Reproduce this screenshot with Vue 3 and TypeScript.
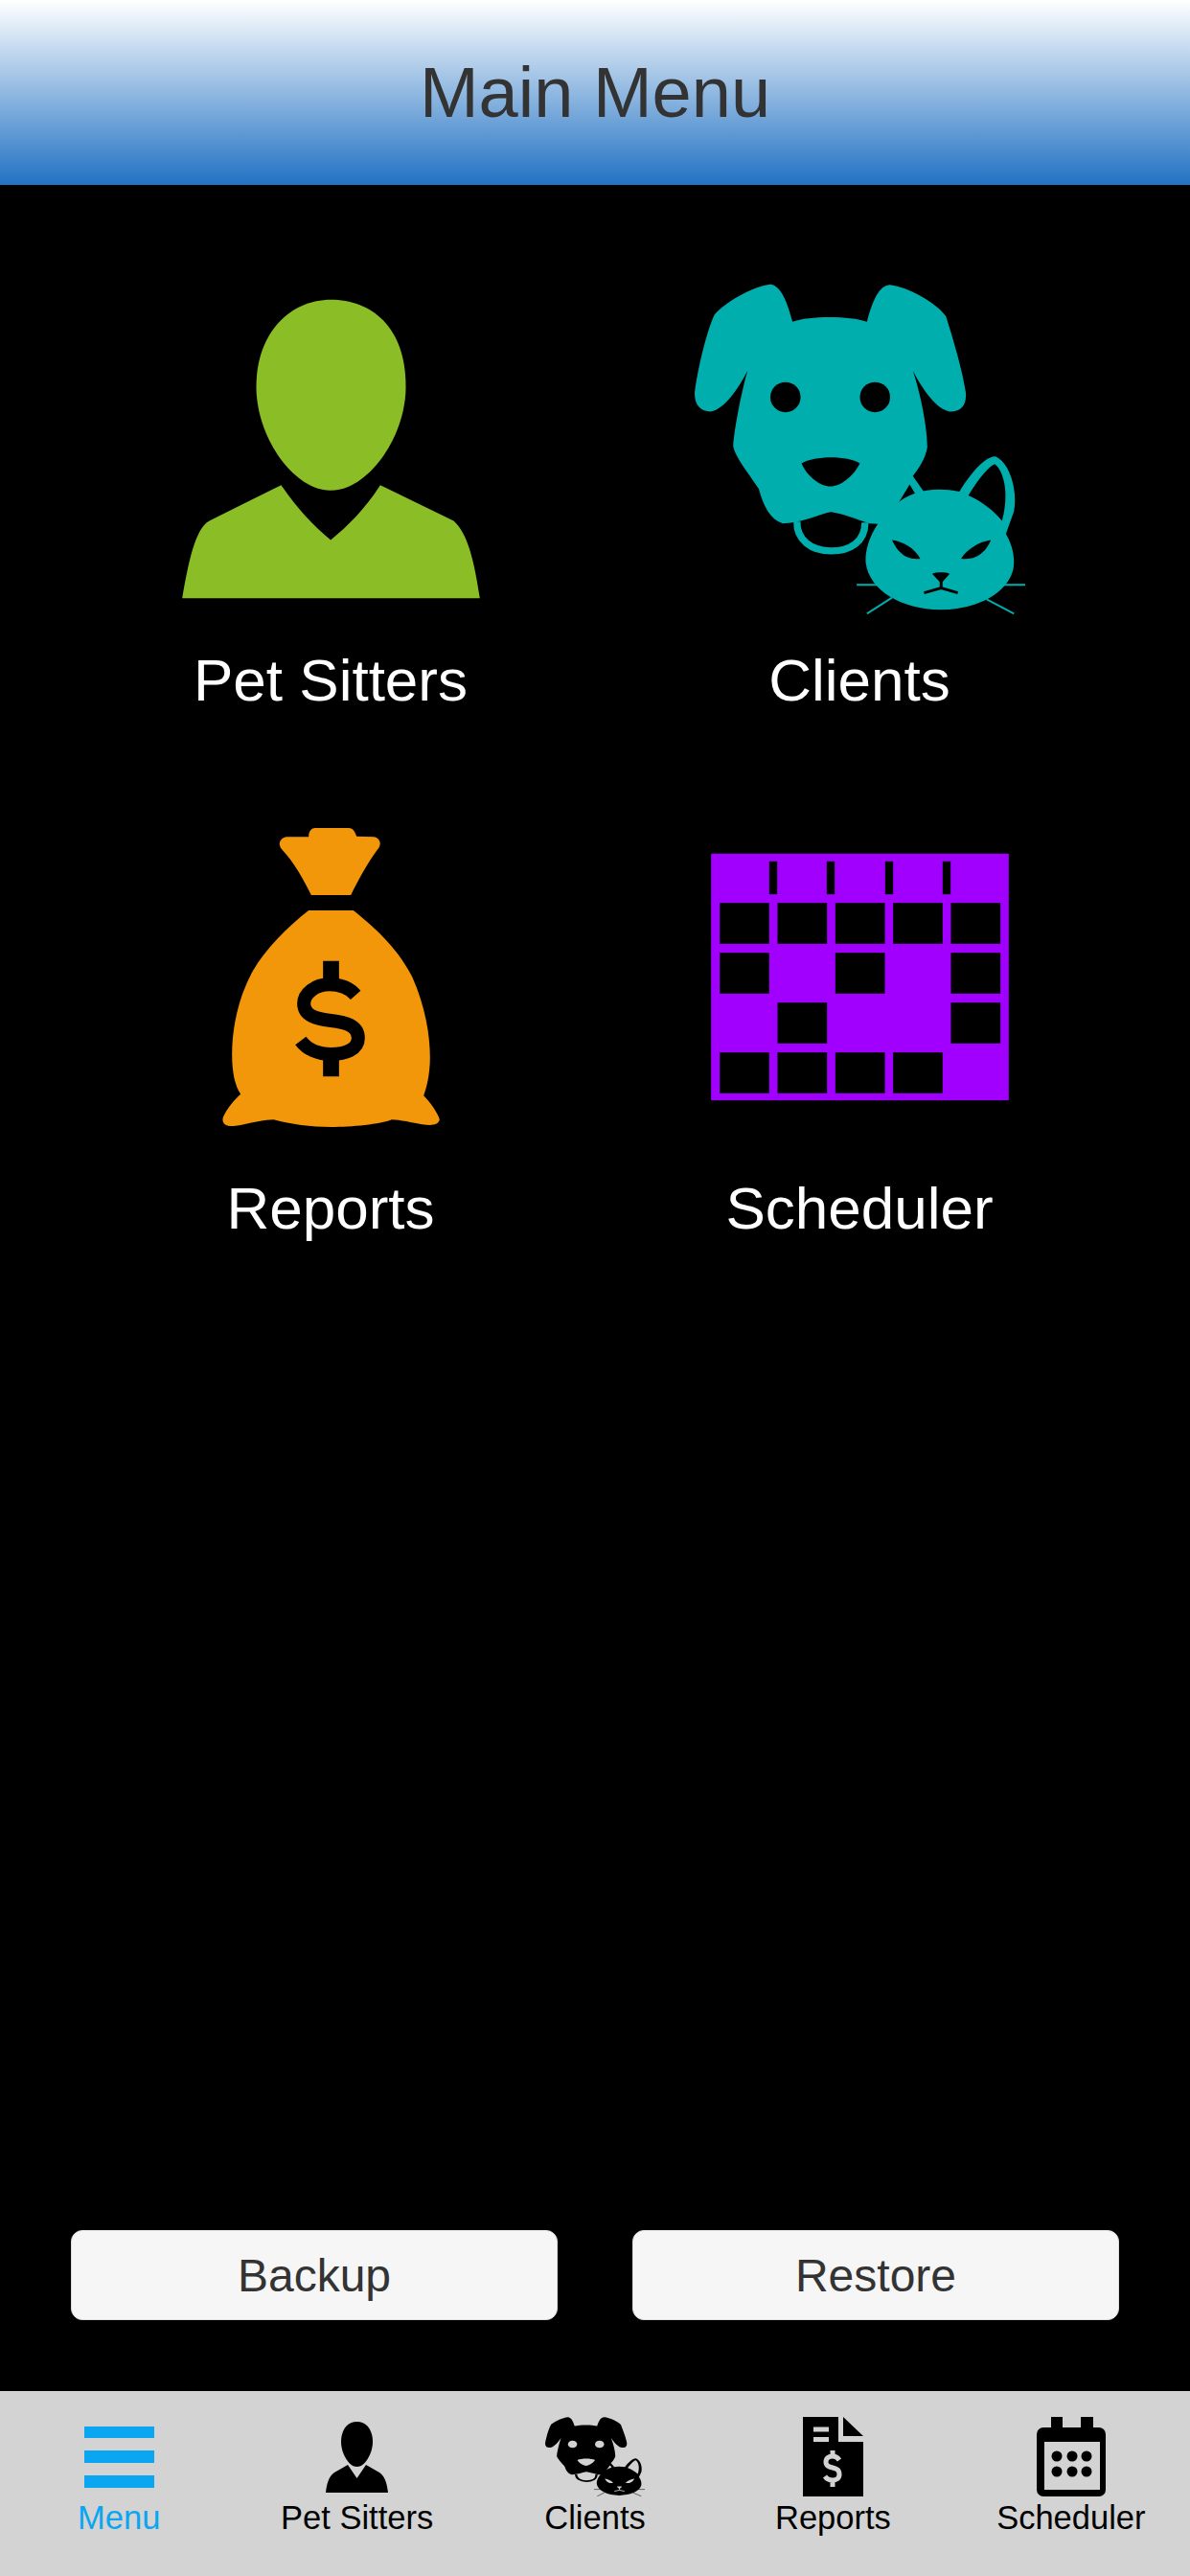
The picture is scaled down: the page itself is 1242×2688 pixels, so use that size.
<script setup lang="ts">
const menuItems = [
  { key: 'sitters', label: 'Pet Sitters' },
  { key: 'clients', label: 'Clients' },
  { key: 'reports', label: 'Reports' },
  { key: 'scheduler', label: 'Scheduler' }
]

const tabs = [
  { key: 'menu', label: 'Menu' },
  { key: 'sitters', label: 'Pet Sitters' },
  { key: 'clients', label: 'Clients' },
  { key: 'reports', label: 'Reports' },
  { key: 'scheduler', label: 'Scheduler' }
]

// cells of the month grid that are cut out of the purple block
const schedulerCells = [
  [0, 1, 2, 3, 4],
  [0, 2, 4],
  [1, 4],
  [0, 1, 2, 3]
].flatMap((cols, row) => cols.map((col) => ({ x: 92 + col * 181, y: 217 + row * 156 })))

const schedulerTicks = [247, 427, 610, 790]
const calendarDots = [21, 37, 52].flatMap((x) => [41, 57].map((y) => ({ x, y })))
</script>

<template>
  <div class="app">
    <svg class="defs" aria-hidden="true">
      <symbol id="pets" viewBox="75 78 1030 1034" preserveAspectRatio="none">
        <!-- dog -->
        <path d="M380 197C430 178 560 178 612 197C630 130 650 82 685 82C740 90 825 135 858 180C880 250 910 350 920 420C922 460 905 478 870 478C830 472 785 410 755 350C775 410 800 520 800 590C795 625 770 660 755 680L790 730L660 830L620 828C580 815 530 795 500 792C470 795 420 825 350 828C310 815 290 775 275 720C250 680 200 620 195 585C200 520 225 400 240 350C210 410 165 472 125 478C90 478 75 455 75 420C85 340 115 220 137 175C170 135 260 85 310 80C345 82 365 140 380 197Z" />
        <path class="hole" d="M705 772L745 706L764 738Z" />
        <circle class="hole" cx="358" cy="433" r="47" />
        <circle class="hole" cx="637" cy="433" r="47" />
        <path class="hole" d="M408 640C450 615 550 615 590 640C570 680 530 712 498 712C465 712 425 680 408 640Z" />
        <path class="line" d="M394 822C392 880 440 914 500 914C560 914 606 885 606 825" stroke-width="22" />
        <!-- cat -->
        <path d="M700 770C750 725 820 712 900 728C935 670 980 618 1012 618C1055 635 1082 720 1070 790L1045 860C1062 890 1075 930 1068 970C1050 1050 950 1098 840 1098C720 1095 620 1040 608 950C605 880 650 810 700 770Z" />
        <path class="hole" d="M928 740C955 695 990 650 1010 642C1040 665 1055 735 1033 820C1000 780 960 755 928 740Z" />
        <path class="hole" d="M690 880C725 885 760 905 778 938C750 942 715 935 690 880Z" />
        <path class="hole" d="M998 880C965 885 925 905 905 938C935 942 975 935 998 880Z" />
        <path class="hole" d="M815 985C830 980 855 980 870 985L843 1015Z" />
        <path class="mouth" d="M843 1010V1030M790 1045L843 1030L895 1045" />
        <path class="line" d="M580 1020H650M612 1110L690 1060M1035 1020H1105M985 1065L1070 1110" stroke-width="6" />
      </symbol>
    </svg>

    <header class="app__header">Main Menu</header>

    <main class="app__main">
      <section class="menu-grid">
        <div v-for="item in menuItems" :key="item.key" class="menu-item" :class="`menu-item--${item.key}`">
          <svg v-if="item.key === 'sitters'" class="menu-item__icon" viewBox="38.5 77.5 1035 1035">
            <path d="M555 128C680 128 790 210 790 400C790 560 670 725 555 725C440 725 322 560 322 400C322 230 430 128 555 128Z" />
            <path d="M400 708L175 820C130 845 110 950 90 1062H1022C1005 950 985 860 940 820L710 708C665 780 610 835 555 880C500 835 445 775 400 708Z" />
          </svg>
          <svg v-else-if="item.key === 'clients'" class="menu-item__icon" viewBox="0 0 345 345">
            <use href="#pets" width="345" height="345" />
          </svg>
          <svg v-else-if="item.key === 'reports'" class="menu-item__icon" viewBox="-82.5 21 1035 1035">
            <path d="M365 100C365 80 375 72 385 72H490C505 72 510 85 515 98L570 100C590 105 595 125 580 140C550 180 520 235 497 282H373C350 235 320 180 282 140C268 125 272 105 295 100Z" />
            <path d="M365 330H505C560 375 640 440 690 540C730 630 745 720 745 790C745 840 735 885 725 910C745 930 770 965 775 985C770 1005 745 1003 720 1000C690 995 650 985 625 985C590 1000 500 1008 435 1008C370 1008 310 1000 255 985C220 985 170 1000 130 1005C105 1007 90 995 98 975C110 950 130 925 152 905C135 880 125 840 125 780C125 700 145 600 190 520C230 450 300 380 365 330Z" />
            <path class="dollar" d="M512 595C490 570 460 562 430 562C385 562 350 590 350 622C350 660 390 670 435 675C480 680 520 690 520 730C520 765 480 780 435 780C395 780 360 765 340 738" />
            <path class="dollar dollar--bar" d="M435 488V550M435 790V850" />
          </svg>
          <svg v-else class="menu-item__icon" viewBox="13.5 -68.5 1035 1035">
            <rect x="65" y="63" width="932" height="772" />
            <rect v-for="x in schedulerTicks" :key="x" class="cut" :x="x" y="87" width="25" height="103" />
            <rect v-for="c in schedulerCells" :key="`${c.x}-${c.y}`" class="cut" :x="c.x" :y="c.y" width="155" height="128" />
          </svg>
          <span class="menu-item__label">{{ item.label }}</span>
        </div>
      </section>

      <div class="actions">
        <button class="actions__btn">Backup</button>
        <button class="actions__btn">Restore</button>
      </div>
    </main>

    <nav class="tabbar">
      <div v-for="tab in tabs" :key="tab.key" class="tab" :class="{ 'tab--active': tab.key === 'menu' }">
        <div class="tab__icon">
          <svg v-if="tab.key === 'menu'" width="73" height="64" viewBox="0 0 73 64">
            <rect width="73" height="12" />
            <rect y="25" width="73" height="13" />
            <rect y="51" width="73" height="13" />
          </svg>
          <svg v-else-if="tab.key === 'sitters'" width="65" height="74" viewBox="0 0 65 74">
            <path d="M32.5 0C43 0 49 9 49 21C49 33 41 47 32.5 47C24 47 16 33 16 21C16 9 22 0 32.5 0Z" />
            <path d="M23 45L9 53C3 57 1 65 0 74H65C64 65 62 57 56 53L42 45L32.5 59Z" />
          </svg>
          <svg v-else-if="tab.key === 'clients'" width="104" height="83" viewBox="0 0 104 83">
            <use href="#pets" width="104" height="83" />
          </svg>
          <svg v-else-if="tab.key === 'reports'" width="63" height="83" viewBox="0 0 63 83">
            <path d="M0 0H37V26H63V83H0Z" />
            <path d="M42 0L63 20H42Z" />
            <path class="tab-cut" d="M11 13H27M11 23.5H27M38 45C36 42 33 41 31 41C27 41 24 43 24 47C24 51 27 52 31 53C35 54 38 55 38 60C38 64 35 66 31 66C27 66 25 65 23 62M31 35V41M31 66V73" />
          </svg>
          <svg v-else width="72" height="83" viewBox="0 0 72 83">
            <rect x="15" width="12" height="16" />
            <rect x="46" width="13" height="16" />
            <rect y="11" width="72" height="72" rx="7" />
            <rect class="tab-fill" x="8" y="26" width="58" height="50" />
            <circle v-for="d in calendarDots" :key="`${d.x}-${d.y}`" :cx="d.x" :cy="d.y" r="5.5" />
          </svg>
        </div>
        <span class="tab__label">{{ tab.label }}</span>
      </div>
    </nav>
  </div>
</template>

<style scoped>
.app {
  display: flex;
  flex-direction: column;
  height: 2688px;
  overflow: hidden;
  background: #000;
  font-family: 'Liberation Sans', Arial, sans-serif;
  --hole: #000;
}

.defs {
  display: none;
}

.hole {
  fill: var(--hole);
}

.line {
  fill: none;
  stroke: currentColor;
}

.mouth {
  fill: none;
  stroke: var(--hole);
  stroke-width: 9;
}

.app__header {
  flex: none;
  height: 193px;
  line-height: 193px;
  text-align: center;
  font-size: 74px;
  color: #333;
  background: linear-gradient(#fff, #2272c3);
}

.app__main {
  flex: 1;
  display: flex;
  flex-direction: column;
  padding: 103px 74px 74px;
  min-height: 0;
}

.menu-grid {
  display: grid;
  grid-template-columns: 1fr 1fr;
  grid-auto-rows: 551px;
  margin: 0 -5px;
}

.menu-item {
  display: flex;
  flex-direction: column;
  align-items: center;
}

.menu-item__icon {
  display: block;
  flex: none;
  width: 345px;
  height: 345px;
  fill: currentColor;
}

.menu-item__label {
  margin-top: 34px;
  font-size: 62px;
  line-height: 70px;
  color: #fff;
}

.menu-item--sitters .menu-item__icon {
  color: #8bbd26;
}

.menu-item--clients .menu-item__icon {
  color: #00aeae;
}

.menu-item--reports .menu-item__icon {
  color: #f2960a;
}

.menu-item--scheduler .menu-item__icon {
  color: #a100ff;
}

.dollar {
  fill: none;
  stroke: #000;
  stroke-width: 42;
}

.dollar--bar {
  stroke-width: 50;
}

.cut {
  fill: #000;
}

.actions {
  display: flex;
  justify-content: space-between;
  margin-top: auto;
}

.actions__btn {
  width: 508px;
  height: 94px;
  padding: 0;
  font-family: inherit;
  font-size: 48px;
  color: #333;
  background: #f6f6f6;
  border: 1px solid #ddd;
  border-radius: 12px;
}

.tabbar {
  flex: none;
  display: flex;
  height: 193px;
  background: #d3d3d3;
  color: #000;
  --hole: #d3d3d3;
}

.tab {
  flex: 1;
  display: flex;
  flex-direction: column;
  align-items: center;
  padding-top: 27px;
}

.tab--active {
  color: #0aa6f2;
}

.tab__icon {
  display: flex;
  align-items: center;
  height: 83px;
  fill: currentColor;
  filter: blur(0.6px);
}

.tab__label {
  margin-top: 2px;
  font-size: 34.5px;
  line-height: 40px;
}

.tab-cut {
  fill: none;
  stroke: #d3d3d3;
  stroke-width: 5;
}

.tab-fill {
  fill: #d3d3d3;
}
</style>
